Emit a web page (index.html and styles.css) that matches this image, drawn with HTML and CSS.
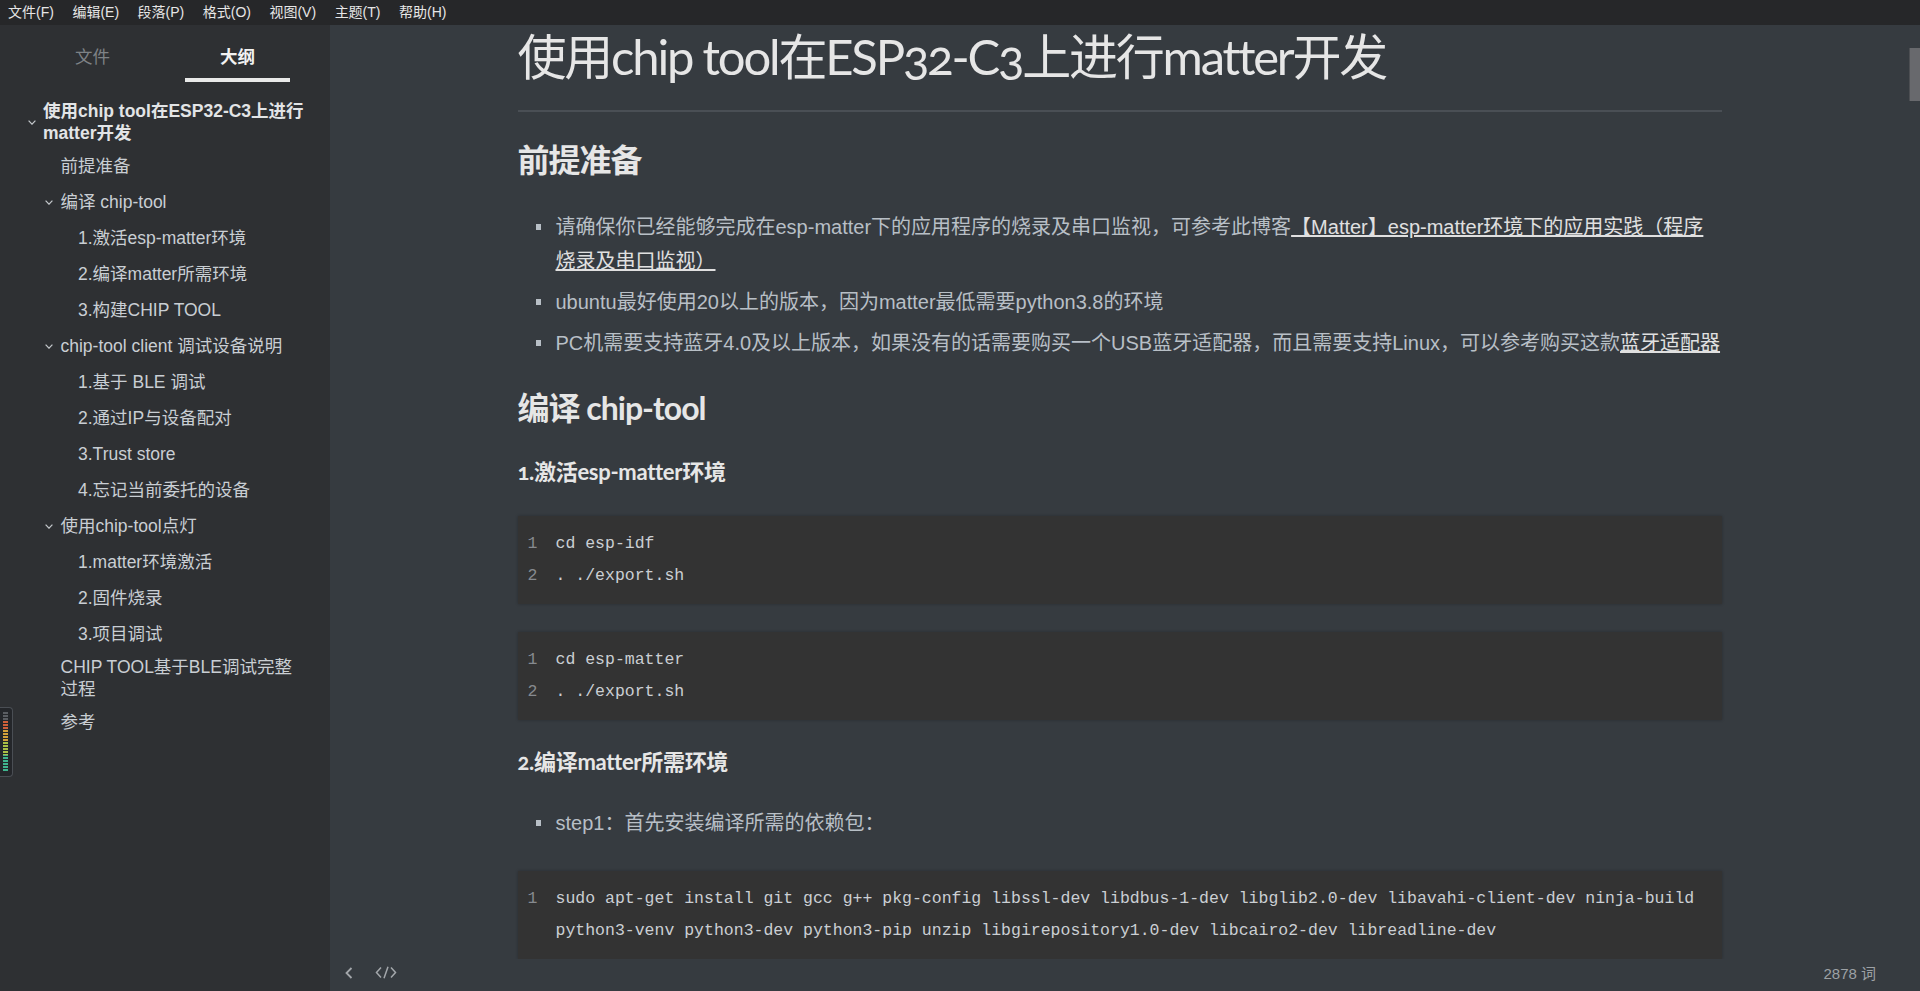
FILE: index.html
```html
<!DOCTYPE html>
<html lang="zh-CN">
<head>
<meta charset="utf-8">
<title>使用chip tool在ESP32-C3上进行matter开发</title>
<link rel="stylesheet" href="styles.css">
</head>
<body>
<div class="menubar">
  <span class="menu-item">文件(F)</span>
  <span class="menu-item">编辑(E)</span>
  <span class="menu-item">段落(P)</span>
  <span class="menu-item">格式(O)</span>
  <span class="menu-item">视图(V)</span>
  <span class="menu-item">主题(T)</span>
  <span class="menu-item">帮助(H)</span>
</div>
<div class="app">
  <aside class="sidebar">
    <div class="tabs">
      <div class="tab">文件</div>
      <div class="tab active">大纲</div>
    </div>
    <div class="outline">
      <div class="row l1 title"><span class="chev"><svg width="8" height="5" viewBox="0 0 8 5"><path d="M0.6 0.6 L4 4.2 L7.4 0.6" fill="none" stroke="#c4c8cc" stroke-width="1.2"/></svg></span><span class="txt">使用chip tool在ESP32-C3上进行matter开发</span></div>
      <div class="row l2"><span class="chev"></span><span class="txt">前提准备</span></div>
      <div class="row l2"><span class="chev"><svg width="8" height="5" viewBox="0 0 8 5"><path d="M0.6 0.6 L4 4.2 L7.4 0.6" fill="none" stroke="#c4c8cc" stroke-width="1.2"/></svg></span><span class="txt">编译 chip-tool</span></div>
      <div class="row l3"><span class="chev"></span><span class="txt">1.激活esp-matter环境</span></div>
      <div class="row l3"><span class="chev"></span><span class="txt">2.编译matter所需环境</span></div>
      <div class="row l3"><span class="chev"></span><span class="txt">3.构建CHIP TOOL</span></div>
      <div class="row l2"><span class="chev"><svg width="8" height="5" viewBox="0 0 8 5"><path d="M0.6 0.6 L4 4.2 L7.4 0.6" fill="none" stroke="#c4c8cc" stroke-width="1.2"/></svg></span><span class="txt">chip-tool client 调试设备说明</span></div>
      <div class="row l3"><span class="chev"></span><span class="txt">1.基于 BLE 调试</span></div>
      <div class="row l3"><span class="chev"></span><span class="txt">2.通过IP与设备配对</span></div>
      <div class="row l3"><span class="chev"></span><span class="txt">3.Trust store</span></div>
      <div class="row l3"><span class="chev"></span><span class="txt">4.忘记当前委托的设备</span></div>
      <div class="row l2"><span class="chev"><svg width="8" height="5" viewBox="0 0 8 5"><path d="M0.6 0.6 L4 4.2 L7.4 0.6" fill="none" stroke="#c4c8cc" stroke-width="1.2"/></svg></span><span class="txt">使用chip-tool点灯</span></div>
      <div class="row l3"><span class="chev"></span><span class="txt">1.matter环境激活</span></div>
      <div class="row l3"><span class="chev"></span><span class="txt">2.固件烧录</span></div>
      <div class="row l3"><span class="chev"></span><span class="txt">3.项目调试</span></div>
      <div class="row l2"><span class="chev"></span><span class="txt">CHIP TOOL基于BLE调试完整过程</span></div>
      <div class="row l2"><span class="chev"></span><span class="txt">参考</span></div>
    </div>
    <div class="meter"><div class="meter-bar"></div></div>
  </aside>
  <main class="main">
    <div class="content-row">
      <div class="scroller">
        <article class="write">
          <h1>使用chip tool在ESP32-C3上进行matter开发</h1>
          <h2>前提准备</h2>
          <ul>
            <li><p>请确保你已经能够完成在esp-matter下的应用程序的烧录及串口监视，可参考此博客<a>【Matter】esp-matter环境下的应用实践（程序<span class="nowrap">烧录及串口监视）</span></a></p></li>
            <li><p>ubuntu最好使用20以上的版本，因为matter最低需要python3.8的环境</p></li>
            <li><p>PC机需要支持蓝牙4.0及以上版本，如果没有的话需要购买一个USB蓝牙适配器，而且需要支持Linux，可以参考购买这款<a>蓝牙适配器</a></p></li>
          </ul>
          <h2>编译 chip-tool</h2>
          <h3>1.激活esp-matter环境</h3>
          <div class="fence">
            <div class="ln">1</div><div class="code">cd esp-idf</div>
            <div class="ln">2</div><div class="code">. ./export.sh</div>
          </div>
          <div class="fence">
            <div class="ln">1</div><div class="code">cd esp-matter</div>
            <div class="ln">2</div><div class="code">. ./export.sh</div>
          </div>
          <h3>2.编译matter所需环境</h3>
          <ul>
            <li><p>step1：首先安装编译所需的依赖包：</p></li>
          </ul>
          <div class="fence">
            <div class="ln">1</div><div class="code">sudo apt-get install git gcc g++ pkg-config libssl-dev libdbus-1-dev libglib2.0-dev libavahi-client-dev ninja-build python3-venv python3-dev python3-pip unzip libgirepository1.0-dev libcairo2-dev libreadline-dev</div>
          </div>
        </article>
      </div>
      <div class="scrollbar"><div class="thumb"></div></div>
    </div>
    <footer class="footer">
      <div class="footer-left">
        <svg width="10" height="12" viewBox="0 0 10 12"><path d="M7.5 1 L2.5 6 L7.5 11" fill="none" stroke="#a3a7ab" stroke-width="1.8"/></svg>
        <svg width="22" height="13" viewBox="0 0 22 13"><path d="M6 1.5 L1.5 6.5 L6 11.5 M16 1.5 L20.5 6.5 L16 11.5 M13 0.8 L9 12.2" fill="none" stroke="#a3a7ab" stroke-width="1.5"/></svg>
      </div>
      <div class="wordcount">2878 词</div>
    </footer>
  </main>
</div>
</body>
</html>
```
FILE: styles.css
```css
* { box-sizing: border-box; margin: 0; padding: 0; }
html, body { height: 100%; }
body {
  width: 1920px;
  height: 991px;
  overflow: hidden;
  display: flex;
  flex-direction: column;
  background: #363b40;
  font-family: "Liberation Sans", "Noto Sans CJK SC", sans-serif;
}

/* menu bar */
.menubar {
  height: 25px;
  flex: none;
  display: flex;
  align-items: center;
  gap: 18.5px;
  padding-left: 8px;
  background: #262729;
}
.menu-item { font-size: 14px; line-height: 25px; color: #e6e6e6; }

.app { flex: 1; display: flex; min-height: 0; }

/* sidebar */
.sidebar {
  width: 330px;
  flex: none;
  background: #2e3033;
  position: relative;
}
.tabs { display: flex; justify-content: space-evenly; }
.tab {
  width: 105px;
  text-align: center;
  font-size: 17.5px;
  line-height: 22px;
  padding: 21px 0 10px;
  border-bottom: 4px solid transparent;
  color: #7e8286;
}
.tab.active { color: #f2f2f2; font-weight: bold; border-bottom-color: #e9e9e9; }

.outline {
  margin-top: 14px;
  font-size: 17.5px;
  line-height: 22px;
  color: #c9ced3;
}
.row {
  min-height: 36px;
  display: flex;
  align-items: center;
  padding: 4px 24px 4px 0;
}
.row.l1 { padding-left: 25px; }
.row.l2 { padding-left: 42.5px; }
.row.l3 { padding-left: 60px; }
.chev { width: 18px; flex: none; display: flex; align-items: center; }
.chev svg { margin-left: 2.5px; display: block; }
.txt { flex: 1; min-width: 0; }
.row.title { font-weight: bold; color: #e2e4e6; }

/* floating level meter widget (overlay) */
.meter {
  position: absolute;
  left: 0;
  top: 682px;
  width: 13px;
  height: 70px;
  background: #24262a;
  border: 1px solid #4a4e54;
  border-left: none;
  border-radius: 0 4px 4px 0;
  padding: 4px 0 4px 3px;
}
.meter-bar {
  width: 5px;
  height: 100%;
  background:
    repeating-linear-gradient(to bottom, transparent 0 2px, #24262a 2px 3px),
    linear-gradient(to bottom, #5a5d62 0 14%, #d0603a 14% 30%, #d4a13a 30% 50%, #a9c046 50% 72%, #3fb48e 72% 100%);
}

/* main */
.main {
  flex: 1;
  min-width: 0;
  display: flex;
  flex-direction: column;
  background: #363b40;
}
.content-row { flex: 1; display: flex; min-height: 0; }
.scroller { flex: 1; overflow: hidden; min-width: 0; }
.scrollbar { width: 11px; flex: none; }
.thumb { margin-top: 23px; height: 53px; background: #68696d; border-left: 1px solid #4d4f53; }

.write {
  width: 1204px;
  margin: 0 auto;
  display: flex;
  flex-direction: column;
  color: #b8bfc6;
  font-size: 20px;
  line-height: 34px;
}
h1, h2, h3 {
  font-family: Lato, "Noto Sans CJK SC", sans-serif;
  font-variant-numeric: oldstyle-nums;
  color: #e6e6e6;
}
h1 {
  font-size: 49px;
  font-weight: 400;
  letter-spacing: -2.2px;
  line-height: 56px;
  padding-top: 3px;
  padding-bottom: 26px;
  border-bottom: 2px solid #4a4f55;
}
h2 { font-size: 32px; line-height: 44px; font-weight: bold; letter-spacing: -1px; margin-top: 26px; }
h3 { font-size: 22px; line-height: 32px; font-weight: bold; letter-spacing: -0.3px; margin-top: 26px; }

ul { list-style: none; margin-top: 28px; }
li { display: flex; }
li + li { margin-top: 7px; }
li::before {
  content: "";
  flex: none;
  width: 5px;
  height: 6px;
  margin: 14px 15px 0 18px;
  background: #b8bfc6;
}
li p { flex: 1; min-width: 0; }
a { color: #e0e0e0; text-decoration: underline; }
.nowrap { white-space: nowrap; }

.fence {
  margin-top: 28px;
  background: #333333;
  box-shadow: 0 0 3px rgba(0, 0, 0, 0.25);
  display: grid;
  grid-template-columns: 28px 1fr;
  padding: 12px 12px 12px 10px;
  font-family: "Liberation Mono", monospace;
  font-size: 16.5px;
  line-height: 32px;
  color: #cbcfd3;
}
ul + .fence { margin-top: 31px; }
.ln { color: #868a8f; }
.code { white-space: pre-wrap; }

/* footer */
.footer {
  height: 32px;
  flex: none;
  display: flex;
  align-items: center;
  justify-content: space-between;
  padding: 0 44px 5px 14px;
  background: #363b40;
}
.footer-left { display: flex; align-items: center; gap: 21px; }
.footer-left svg { display: block; }
.wordcount { font-size: 15px; color: #9da1a5; }
```
